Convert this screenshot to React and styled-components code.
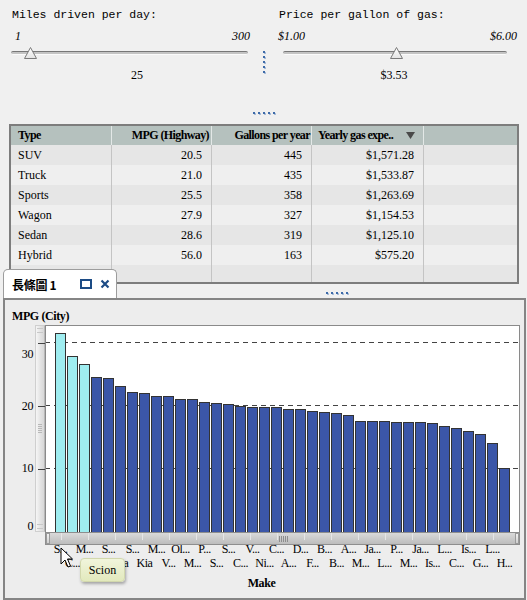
import React from "react";
import styled, { createGlobalStyle } from "styled-components";

const GlobalStyle = createGlobalStyle`
  html, body {
    margin: 0;
    padding: 0;
    background: #f0f0f0;
  }
  body {
    width: 527px;
    height: 600px;
    overflow: hidden;
    font-family: "Liberation Serif", "Noto Sans CJK TC", serif;
    color: #000;
  }
`;

const sliders = [
  {
    title: "Miles driven per day:",
    min: 1,
    max: 300,
    value: 25,
    minLabel: "1",
    maxLabel: "300",
    valueLabel: "25",
  },
  {
    title: "Price per gallon of gas:",
    min: 1,
    max: 6,
    value: 3.53,
    minLabel: "$1.00",
    maxLabel: "$6.00",
    valueLabel: "$3.53",
  },
];

const rows = [
  ["SUV", "20.5", "445", "$1,571.28"],
  ["Truck", "21.0", "435", "$1,533.87"],
  ["Sports", "25.5", "358", "$1,263.69"],
  ["Wagon", "27.9", "327", "$1,154.53"],
  ["Sedan", "28.6", "319", "$1,125.10"],
  ["Hybrid", "56.0", "163", "$575.20"],
];

const mpg = [
  31.4, 27.8, 26.5, 24.4, 24.3, 23.0, 22.1, 21.9, 21.4, 21.4, 21.0, 21.0,
  20.5, 20.3, 20.2, 19.8, 19.7, 19.7, 19.7, 19.4, 19.4, 19.0, 18.9, 18.7,
  18.4, 17.5, 17.5, 17.5, 17.3, 17.3, 17.3, 17.1, 16.7, 16.3, 15.9, 15.4,
  14.0, 10.0,
];

const topLabels = [
  "S...", "M...", "S...", "S...", "M...", "Ol...", "P...", "S...", "V...",
  "C...", "D...", "B...", "A...", "Ja...", "P...", "Ja...", "L...", "Is...",
  "L...",
];
const bottomLabels = [
  "C...", "M...", "Kia", "Kia", "V...", "M...", "S...", "C...", "Ni...",
  "A...", "F...", "B...", "M...", "L...", "M...", "Is...", "C...", "G...",
  "H...",
];

// chart scale: plot is 207px tall, 0 sits on the bottom edge
const PLOT_W = 475;
const PLOT_H = 207;
const ZERO = 206;
const PX = 6.3;
const yOf = (v) => ZERO - v * PX;

const Page = styled.div`
  width: 527px;
  height: 600px;
`;

const SlidersRow = styled.div`
  display: flex;
  padding: 8px 0 0 11px;
`;

const SliderGroup = styled.div`
  display: flex;
  flex-direction: column;
  width: ${(p) => p.$width}px;
`;

const SliderTitle = styled.div`
  font-family: "Liberation Mono", monospace;
  font-size: 11.5px;
  line-height: 14px;
  padding-left: 1px;
  white-space: nowrap;
`;

const RangeLabels = styled.div`
  display: flex;
  justify-content: space-between;
  margin-top: 7px;
  padding: ${(p) => p.$pad};
  font-style: italic;
  font-size: 12px;
  line-height: 14px;
`;

const TrackWrap = styled.div`
  position: relative;
  height: 20px;
  width: ${(p) => p.$width}px;
  margin-left: ${(p) => p.$offset}px;
`;

const Track = styled.div`
  position: absolute;
  left: 0;
  right: 0;
  top: 8px;
  height: 2px;
  border-radius: 2px;
  background: #c4c4c4;
  border-top: 1px solid #777;
  border-bottom: 1px solid #fbfbfb;
`;

const Thumb = styled.svg`
  position: absolute;
  top: 4px;
  width: 13px;
  height: 12px;
`;

const ValueLabel = styled.div`
  margin-top: 5px;
  font-size: 12px;
  line-height: 14px;
  text-align: center;
  padding: ${(p) => p.$pad};
`;

const Splitter = styled.div`
  width: 15px;
  padding-top: 43px;
`;

const Dots = styled.div`
  display: flex;
  flex-direction: ${(p) => (p.$vertical ? "column" : "row")};
  gap: 3px;
  span {
    display: block;
    width: 2px;
    height: 2px;
    background: #3d6aa8;
    box-shadow: 1px 1px 0 #a8bcd8;
  }
`;

const HDotsRow = styled.div`
  display: flex;
  justify-content: center;
  padding-left: 0;
  margin-top: 30px;
  height: 2px;
`;

const Table = styled.div`
  margin: 10px 0 0 9px;
  width: 506px;
  border: 2px solid #7d7d7d;
  font-size: 12px;
`;

const Row = styled.div`
  display: grid;
  grid-template-columns: 101px 100px 100px 112px 1fr;
  height: ${(p) => p.$h}px;
  background: ${(p) => (p.$alt ? "#efefef" : "#e6e6e6")};
`;

const HeadRow = styled(Row)`
  background: #b5c1be;
  font-weight: bold;
  letter-spacing: -0.6px;
`;

const Cell = styled.div`
  display: flex;
  align-items: center;
  justify-content: ${(p) => (p.$num ? "flex-end" : "flex-start")};
  padding: ${(p) => (p.$num ? "0 9px 0 0" : "0 0 0 7px")};
  border-right: 1px solid ${(p) => (p.$head ? "#e3e8e7" : "#c4c4c4")};
  white-space: nowrap;
  overflow: hidden;
  &:last-child {
    border-right: none;
  }
`;

const HeadCell = styled(Cell)`
  padding: ${(p) => p.$pad || "0 0 0 7px"};
  justify-content: ${(p) => p.$justify || "flex-start"};
`;

const SortArrow = styled.svg`
  width: 9px;
  height: 7px;
  margin-left: auto;
  margin-right: 8px;
`;

const TabRow = styled.div`
  position: relative;
  display: flex;
  align-items: flex-start;
  height: 29px;
  margin-top: -15px;
`;

const Tab = styled.div`
  display: flex;
  align-items: center;
  box-sizing: border-box;
  width: 114px;
  height: 29px;
  margin-left: 3px;
  padding: 0 0 0 8px;
  background: #fff;
  border: 1px solid #9c9c9c;
  border-bottom: none;
  border-radius: 5px 5px 0 0;
`;

const TabTitle = styled.span`
  font-family: "Noto Sans CJK TC", "Liberation Serif", serif;
  font-weight: bold;
  font-size: 12px;
  letter-spacing: -0.3px;
`;

const TabIcon = styled.svg`
  margin-left: ${(p) => p.$gap}px;
  display: block;
`;

const TabDots = styled.div`
  margin: 23px 0 0 209px;
`;

const Panel = styled.div`
  position: relative;
  box-sizing: border-box;
  width: 523px;
  height: 302px;
  margin-left: 3px;
  border: 2px solid #858585;
  background: #ededed;
`;

const ChartTitle = styled.div`
  box-sizing: border-box;
  height: 25px;
  padding: 9px 0 0 7px;
  font-weight: bold;
  font-size: 12px;
  line-height: 14px;
  letter-spacing: -0.4px;
`;

const ChartGrid = styled.div`
  display: grid;
  grid-template-columns: 30px 10px ${PLOT_W}px;
  grid-template-rows: ${PLOT_H}px 13px 26px;
`;

const VScroll = styled.div`
  position: relative;
  box-sizing: border-box;
  border: 1px solid #cfcfcf;
  border-right-color: #b8b8b8;
  background: linear-gradient(to right, #f6f6f6, #e2e2e2 60%, #d8d8d8);
`;

const VCap = styled.div`
  position: absolute;
  left: 1px;
  right: 1px;
  height: 3px;
  ${(p) => (p.$bottom ? "bottom: 2px;" : "top: 2px;")}
  border-top: 1px solid #c8c8c8;
  border-bottom: 1px solid #c8c8c8;
`;

const VGrip = styled.div`
  position: absolute;
  left: 2px;
  right: 2px;
  top: 98px;
  height: 9px;
  background: repeating-linear-gradient(
    to bottom,
    #b8b8b8 0 1px,
    transparent 1px 2px
  );
`;

const Tick = styled.div`
  position: absolute;
  right: -1px;
  width: 7px;
  height: 1px;
  top: ${(p) => p.$y}px;
  background: #444;
`;

const HScroll = styled.div`
  grid-column: 3;
  position: relative;
  box-sizing: border-box;
  border: 1px solid #8e8e8e;
  background: repeating-linear-gradient(
        to right,
        transparent 0 15px,
        #e6e6e6 15px 16px,
        transparent 16px 27px
      )
      0 0 / 100% 7px no-repeat,
    linear-gradient(#d9d9d9, #bdbdbd);
`;

const HEnd = styled.div`
  position: absolute;
  top: 0;
  bottom: 0;
  width: 4px;
  ${(p) => (p.$right ? "right: 0;" : "left: 0;")}
  background: linear-gradient(#f2f2f2, #d0d0d0);
  border: 1px solid #9a9a9a;
  box-sizing: border-box;
`;

const HGrip = styled.div`
  position: absolute;
  left: 233px;
  top: 3px;
  width: 10px;
  height: 6px;
  background: repeating-linear-gradient(
    to right,
    #8d8d8d 0 1px,
    transparent 1px 2px
  );
`;

const Corner = styled.div`
  grid-column: 1 / span 2;
`;

const XLabels = styled.svg`
  grid-column: 3;
  overflow: visible;
`;

const AxisName = styled.div`
  margin-top: 5px;
  padding-right: 6px;
  text-align: center;
  font-weight: bold;
  font-size: 12px;
  line-height: 14px;
  letter-spacing: -0.4px;
`;

const Tooltip = styled.div`
  position: absolute;
  left: 75px;
  top: 258px;
  box-sizing: border-box;
  width: 45px;
  height: 24px;
  display: flex;
  align-items: center;
  justify-content: center;
  font-size: 12px;
  background: linear-gradient(#f1f5dc, #e2e9bd);
  border: 1px solid #d2d8ad;
  border-radius: 4px;
  box-shadow: 1px 2px 3px rgba(0, 0, 0, 0.3);
`;

const Cursor = styled.svg`
  position: absolute;
  left: 55px;
  top: 247px;
`;

function Slider({ data, width, trackWidth, trackOffset, rangePad, valuePad }) {
  const pos = ((data.value - data.min) / (data.max - data.min)) * trackWidth;
  return (
    <SliderGroup $width={width}>
      <SliderTitle>{data.title}</SliderTitle>
      <RangeLabels $pad={rangePad}>
        <span>{data.minLabel}</span>
        <span>{data.maxLabel}</span>
      </RangeLabels>
      <TrackWrap $width={trackWidth} $offset={trackOffset}>
        <Track />
        <Thumb viewBox="0 0 13 12" style={{ left: pos - 6.5 }}>
          <defs>
            <linearGradient id="thumbFill" x1="0" y1="0" x2="0" y2="1">
              <stop offset="0" stopColor="#ffffff" />
              <stop offset="1" stopColor="#e4e4e4" />
            </linearGradient>
          </defs>
          <polygon
            points="6.5,0.5 12.5,11.5 0.5,11.5"
            fill="url(#thumbFill)"
            stroke="#7a7a7a"
          />
        </Thumb>
      </TrackWrap>
      <ValueLabel $pad={valuePad}>{data.valueLabel}</ValueLabel>
    </SliderGroup>
  );
}

function DotLine({ vertical }) {
  return (
    <Dots $vertical={vertical}>
      <span />
      <span />
      <span />
      <span />
      <span />
    </Dots>
  );
}

function Plot() {
  return (
    <svg width={PLOT_W} height={PLOT_H} style={{ display: "block" }}>
      <rect x="0" y="0" width={PLOT_W} height={PLOT_H} fill="#fff" />
      {[30, 20, 10].map((v) => (
        <line
          key={v}
          x1="0"
          x2={PLOT_W}
          y1={Math.round(yOf(v)) + 0.5}
          y2={Math.round(yOf(v)) + 0.5}
          stroke="#444"
          strokeDasharray="5 4"
        />
      ))}
      {mpg.map((v, i) => {
        const top = Math.round(yOf(v));
        return (
          <rect
            key={i}
            x={10 + i * 12 + 0.5}
            y={top + 0.5}
            width="10"
            height={PLOT_H - top}
            fill={i < 3 ? "#9fedf0" : "#3b56a8"}
            stroke="#333"
          />
        );
      })}
      <rect
        x="0.5"
        y="0.5"
        width={PLOT_W - 1}
        height={PLOT_H}
        fill="none"
        stroke="#8a8a8a"
      />
    </svg>
  );
}

function YAxis() {
  const labels = [
    ["30", 29],
    ["20", 81],
    ["10", 143],
    ["0", 201],
  ];
  return (
    <svg width="30" height={PLOT_H} style={{ display: "block" }}>
      {labels.map(([t, y]) => (
        <text
          key={t}
          x="28"
          y={y + 4}
          textAnchor="end"
          fontSize="12"
          fontFamily="Liberation Serif, serif"
          letterSpacing="-0.4"
        >
          {t}
        </text>
      ))}
    </svg>
  );
}

export default function App() {
  return (
    <Page>
      <GlobalStyle />
      <SlidersRow>
        <Slider
          data={sliders[0]}
          width={252}
          trackWidth={237}
          trackOffset={0}
          rangePad="0 13px 0 4px"
          valuePad="0"
        />
        <Splitter>
          <DotLine vertical />
        </Splitter>
        <Slider
          data={sliders[1]}
          width={241}
          trackWidth={224}
          trackOffset={5}
          rangePad="0 2px 0 0"
          valuePad="0 9px 0 0"
        />
      </SlidersRow>

      <HDotsRow>
        <DotLine />
      </HDotsRow>

      <Table>
        <HeadRow $h={19}>
          <HeadCell $head>Type</HeadCell>
          <HeadCell $head $justify="flex-end" $pad="0 2px 0 0">
            MPG (Highway)
          </HeadCell>
          <HeadCell $head $justify="flex-end" $pad="0 1px 0 0">
            Gallons per year
          </HeadCell>
          <HeadCell $head $pad="0 0 0 6px">
            Yearly gas expe..
            <SortArrow viewBox="0 0 9 7">
              <polygon points="0,0 9,0 4.5,7" fill="#4a4a4a" />
            </SortArrow>
          </HeadCell>
          <HeadCell $head />
        </HeadRow>
        {rows.map((r, i) => (
          <Row key={r[0]} $h={20} $alt={i % 2 === 1}>
            <Cell>{r[0]}</Cell>
            <Cell $num>{r[1]}</Cell>
            <Cell $num>{r[2]}</Cell>
            <Cell $num>{r[3]}</Cell>
            <Cell />
          </Row>
        ))}
        <Row $h={17}>
          <Cell />
          <Cell />
          <Cell />
          <Cell />
          <Cell />
        </Row>
      </Table>

      <TabRow>
        <Tab>
          <TabTitle>長條圖 1</TabTitle>
          <TabIcon $gap={24} width="12" height="10" viewBox="0 0 12 10">
            <rect
              x="1"
              y="1"
              width="10"
              height="8"
              fill="none"
              stroke="#1c4b85"
              strokeWidth="2"
            />
          </TabIcon>
          <TabIcon $gap={8} width="10" height="10" viewBox="0 0 10 10">
            <path
              d="M1.5 1.5 L8.5 8.5 M8.5 1.5 L1.5 8.5"
              stroke="#1c4b85"
              strokeWidth="2.2"
            />
          </TabIcon>
        </Tab>
        <TabDots>
          <DotLine />
        </TabDots>
      </TabRow>

      <Panel>
        <ChartTitle>MPG (City)</ChartTitle>
        <ChartGrid>
          <YAxis />
          <VScroll>
            <VCap />
            <VGrip />
            <VCap $bottom />
            {[30, 20, 10].map((v) => (
              <Tick key={v} $y={Math.round(yOf(v))} />
            ))}
          </VScroll>
          <Plot />
          <Corner />
          <HScroll>
            <HEnd />
            <HGrip />
            <HEnd $right />
          </HScroll>
          <Corner />
          <XLabels width={PLOT_W} height="26">
            {mpg.map((_, i) => {
              const top = i % 2 === 0;
              const label = top
                ? topLabels[i / 2]
                : bottomLabels[(i - 1) / 2];
              return (
                <text
                  key={i}
                  x={15.5 + i * 12}
                  y={top ? 8 : 22}
                  textAnchor="middle"
                  fontSize="12"
                  fontFamily="Liberation Serif, serif"
                  letterSpacing="-0.5"
                >
                  {label}
                </text>
              );
            })}
          </XLabels>
        </ChartGrid>
        <AxisName>Make</AxisName>
        <Tooltip>Scion</Tooltip>
        <Cursor width="14" height="22" viewBox="0 0 14 22">
          <path
            d="M1 1 L1 17 L5 13 L8 20 L10.5 19 L7.5 12 L12.5 12 Z"
            fill="#fff"
            stroke="#000"
            strokeWidth="1"
            strokeLinejoin="round"
          />
        </Cursor>
      </Panel>
    </Page>
  );
}
